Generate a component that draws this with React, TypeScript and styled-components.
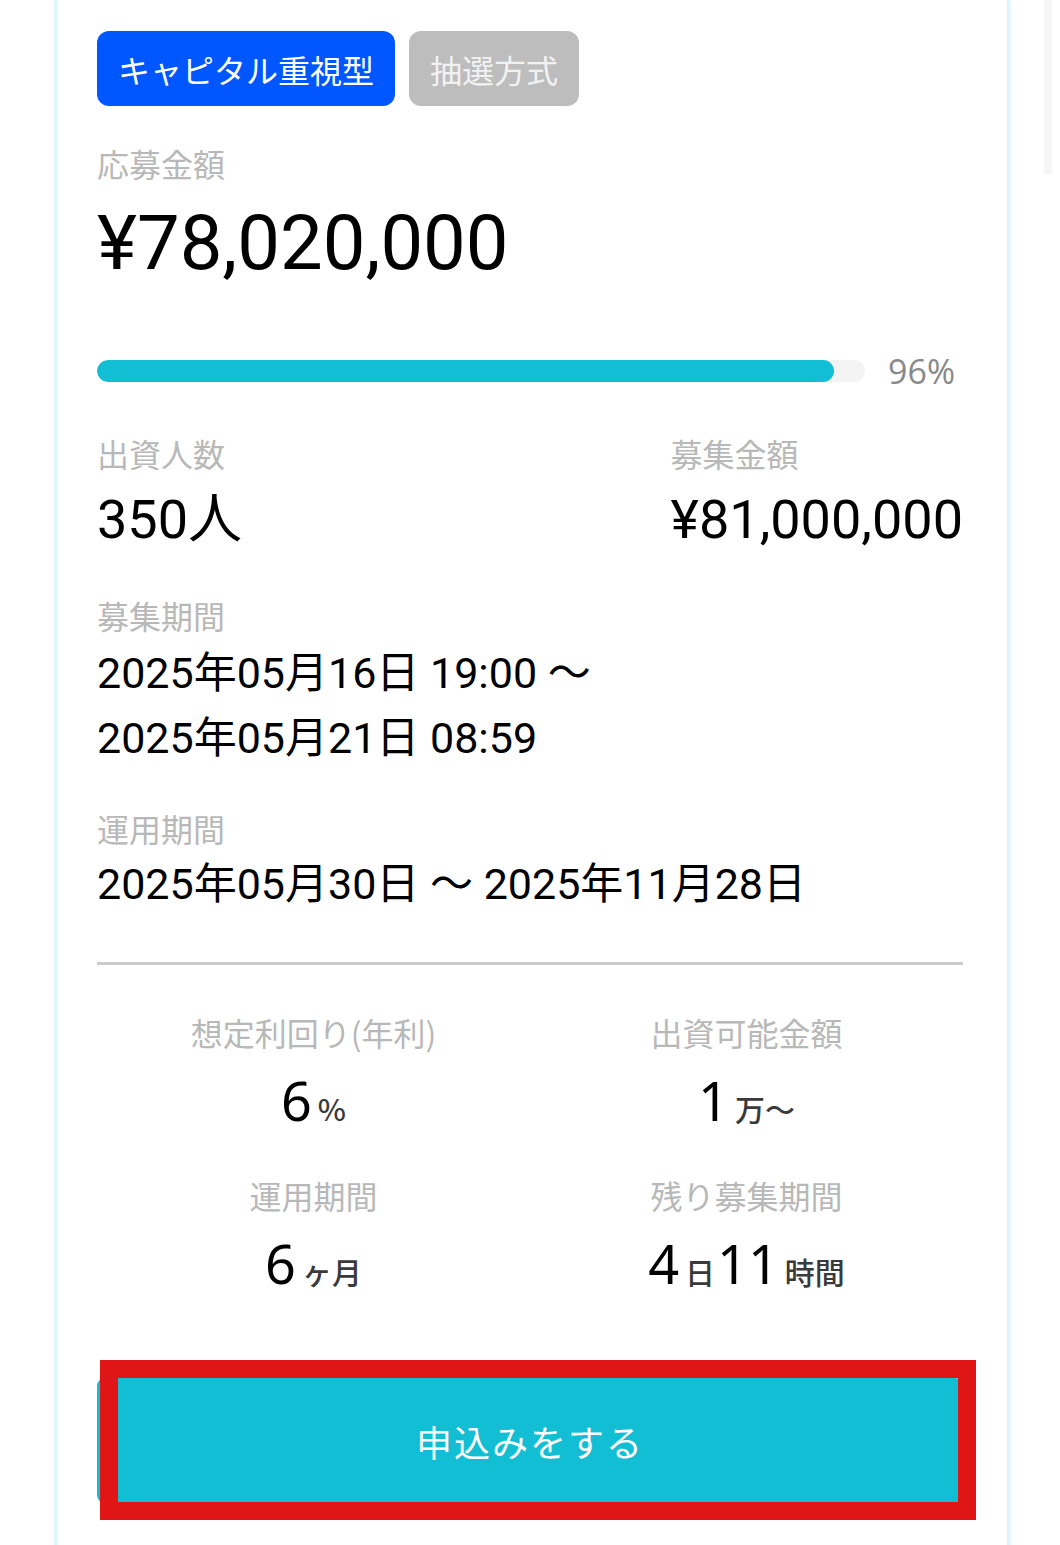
import styled, { createGlobalStyle } from "styled-components";

const GlobalStyle = createGlobalStyle`
  html, body {
    margin: 0;
    padding: 0;
    background: #fff;
  }
  body {
    font-family: Roboto, "Noto Sans CJK JP", sans-serif;
    color: #111;
  }
`;

const Page = styled.div`
  position: relative;
  height: 1545px;
  overflow: hidden;
  padding-left: 54px;
  box-sizing: border-box;
`;

const ScrollHint = styled.div`
  position: absolute;
  top: 0;
  left: 1044px;
  width: 8px;
  height: 175px;
  background: #f6f6f6;
  border-radius: 0 0 4px 4px;
`;

const Card = styled.div`
  width: 956px;
  min-height: 1600px;
  box-sizing: border-box;
  border: 3px solid #dff4fb;
  border-top: none;
  box-shadow: inset 3px 0 4px -2px #e8f8fd, 2px 0 4px #eef9fd;
  background: #fff;
  padding: 31px 44px 0 40px;
`;

const Badges = styled.div`
  display: flex;
  gap: 14px;
`;

const Badge = styled.span<{ $tone: "blue" | "gray" }>`
  display: inline-flex;
  align-items: center;
  height: 75px;
  padding: 0 21px;
  border-radius: 12px;
  font-family: "Noto Sans CJK JP", sans-serif;
  font-size: 32px;
  background: ${(p) => (p.$tone === "blue" ? "#0057ff" : "#bdbdbd")};
  color: ${(p) => (p.$tone === "blue" ? "#fff" : "#f2f2f2")};
`;

const Label = styled.div<{ $gap?: number }>`
  font-family: "Noto Sans CJK JP", sans-serif;
  font-size: 32px;
  line-height: 44px;
  color: #b8b8b8;
  margin-top: ${(p) => p.$gap ?? 0}px;
`;

const BigAmount = styled.div`
  font-size: 76px;
  line-height: 90px;
  margin-top: 13px;
  color: #000;
`;

const ProgressRow = styled.div`
  display: flex;
  align-items: center;
  gap: 23px;
  height: 44px;
  margin-top: 61px;
`;

const Track = styled.div`
  width: 768px;
  height: 22px;
  border-radius: 11px;
  background: #f3f3f3;
  overflow: hidden;
`;

const Fill = styled.div`
  height: 100%;
  border-radius: 11px;
  background: #12bed3;
`;

const Percent = styled.span`
  font-family: "Open Sans", sans-serif;
  font-size: 34px;
  color: #8a8a8a;
`;

const StatsRow = styled.div`
  display: flex;
  justify-content: space-between;
  margin-top: 38px;
`;

const Stat = styled.div``;

const StatValue = styled.div`
  font-size: 54px;
  line-height: 70px;
  margin-top: 10px;
  color: #000;
`;

const DateText = styled.div<{ $gap?: number }>`
  font-size: 43px;
  line-height: 65px;
  margin-top: ${(p) => p.$gap ?? 0}px;
  color: #000;
`;

const Divider = styled.hr`
  border: none;
  height: 3px;
  background: #cccccc;
  margin: 45px 0 0;
`;

const Grid = styled.div`
  display: grid;
  grid-template-columns: 1fr 1fr;
  row-gap: 38px;
  margin-top: 45px;
  text-align: center;
`;

const Cell = styled.div``;

const CellValue = styled.div`
  display: flex;
  justify-content: center;
  align-items: baseline;
  gap: 2px;
  height: 70px;
  line-height: 70px;
  margin-top: 11px;
`;

const Num = styled.span`
  font-family: "Noto Sans", sans-serif;
  font-size: 54px;
  color: #000;
`;

const Unit = styled.span`
  font-family: "Noto Sans CJK JP", sans-serif;
  font-size: 30px;
  font-weight: 500;
  margin-left: 6px;
  color: #3a3a3a;
`;

const ButtonWrap = styled.div`
  position: relative;
  margin-top: 80px;
`;

const ApplyButton = styled.button`
  display: flex;
  align-items: center;
  justify-content: center;
  width: 100%;
  height: 125px;
  border: none;
  border-radius: 8px;
  background: #12bed3;
  color: #fff;
  font-family: "Noto Sans CJK JP", sans-serif;
  font-size: 36px;
  letter-spacing: 2px;
`;

const Highlight = styled.div`
  position: absolute;
  left: 3px;
  top: -18px;
  width: 876px;
  height: 160px;
  box-sizing: border-box;
  border: 18px solid #e01616;
  pointer-events: none;
`;

const gridItems = [
  { label: "想定利回り(年利)", parts: [["6", "%"]] },
  { label: "出資可能金額", parts: [["1", "万～"]] },
  { label: "運用期間", parts: [["6", "ヶ月"]] },
  { label: "残り募集期間", parts: [["4", "日"], ["11", "時間"]] },
];

export default function App() {
  const progress = 96;
  return (
    <>
      <GlobalStyle />
      <Page>
        <ScrollHint />
        <Card>
          <Badges>
            <Badge $tone="blue">キャピタル重視型</Badge>
            <Badge $tone="gray">抽選方式</Badge>
          </Badges>

          <Label $gap={35}>応募金額</Label>
          <BigAmount>¥78,020,000</BigAmount>

          <ProgressRow>
            <Track>
              <Fill style={{ width: `${progress}%` }} />
            </Track>
            <Percent>{progress}%</Percent>
          </ProgressRow>

          <StatsRow>
            <Stat>
              <Label>出資人数</Label>
              <StatValue>350人</StatValue>
            </Stat>
            <Stat>
              <Label>募集金額</Label>
              <StatValue>¥81,000,000</StatValue>
            </Stat>
          </StatsRow>

          <Label $gap={38}>募集期間</Label>
          <DateText $gap={4}>2025年05月16日 19:00 〜</DateText>
          <DateText>2025年05月21日 08:59</DateText>

          <Label $gap={35}>運用期間</Label>
          <DateText $gap={2}>2025年05月30日 〜 2025年11月28日</DateText>

          <Divider />

          <Grid>
            {gridItems.map((item) => (
              <Cell key={item.label}>
                <Label>{item.label}</Label>
                <CellValue>
                  {item.parts.map(([n, u]) => (
                    <span key={n + u}>
                      <Num>{n}</Num>
                      <Unit>{u}</Unit>
                    </span>
                  ))}
                </CellValue>
              </Cell>
            ))}
          </Grid>

          <ButtonWrap>
            <ApplyButton>申込みをする</ApplyButton>
            <Highlight />
          </ButtonWrap>
        </Card>
      </Page>
    </>
  );
}
